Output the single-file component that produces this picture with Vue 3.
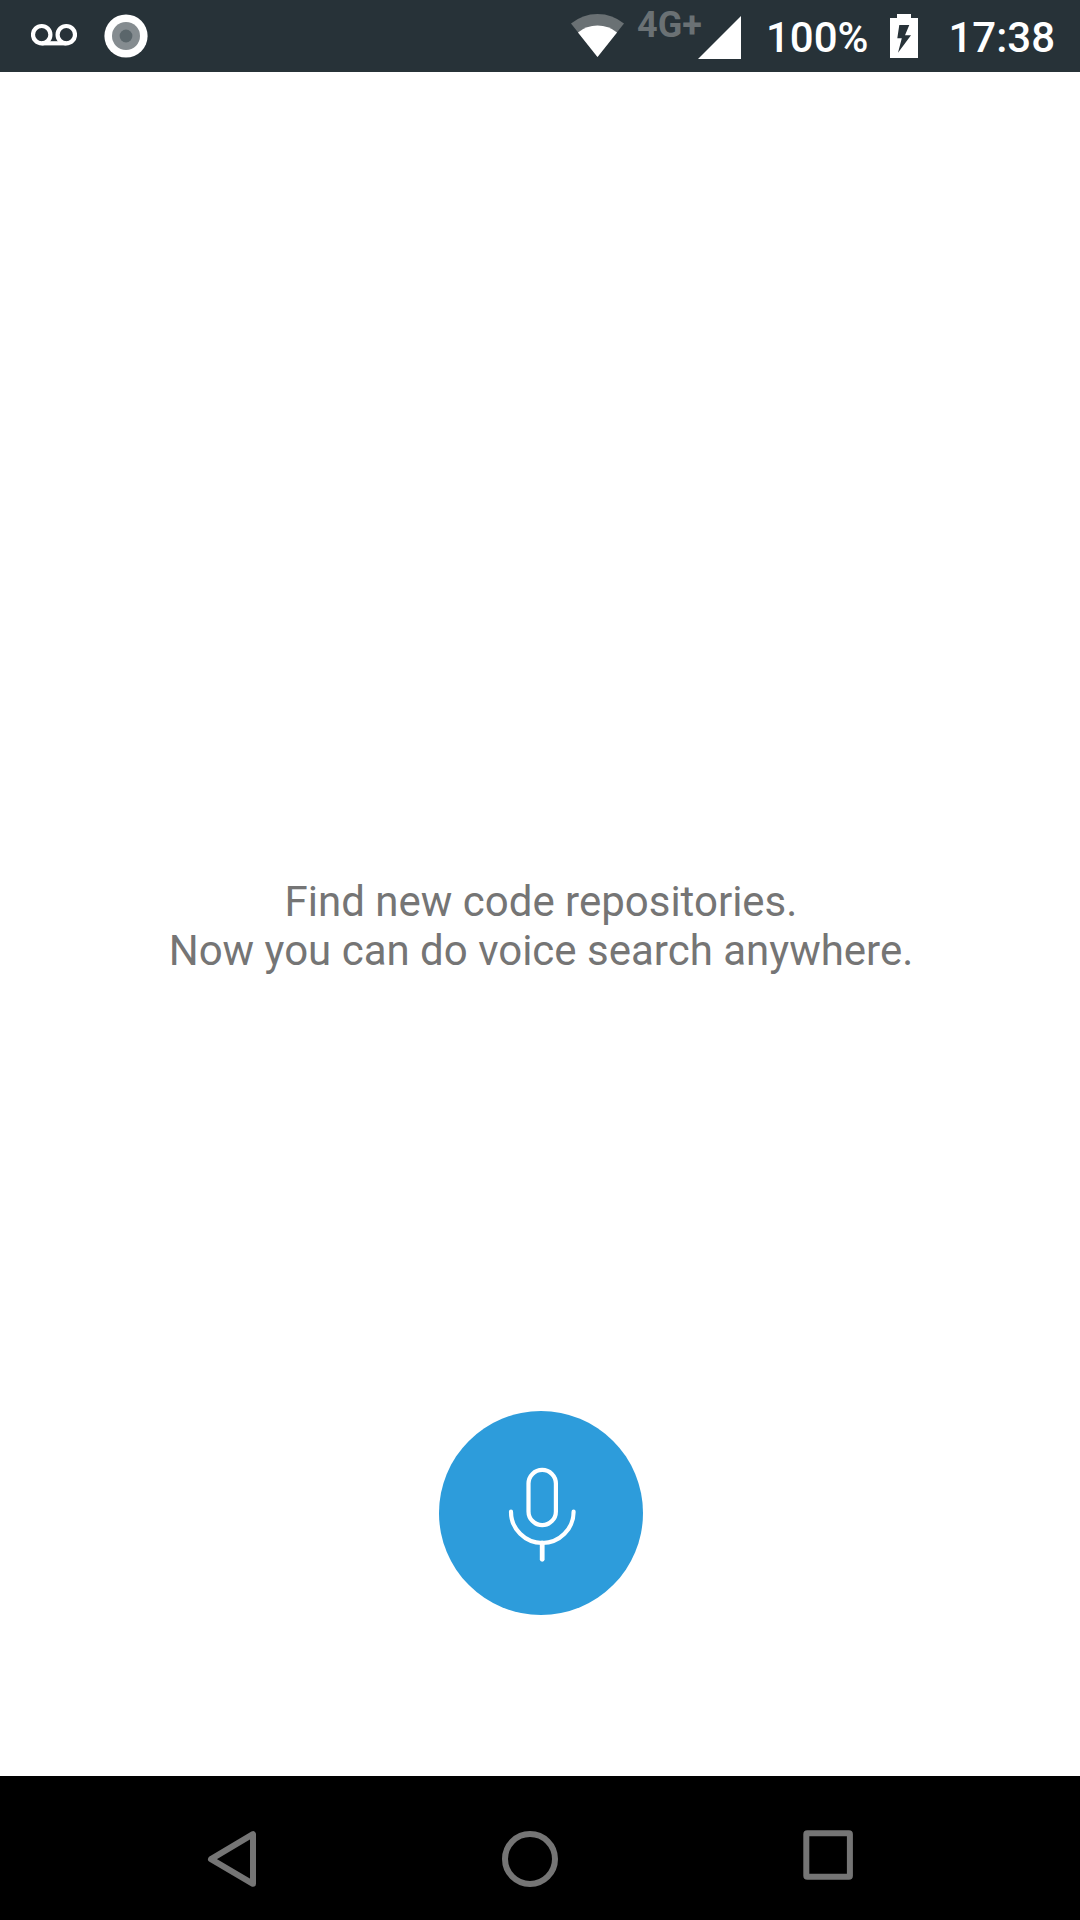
<script setup>
const battery = '100%'
const time = '17:38'
const network = '4G+'
</script>

<template>
  <div class="screen">
    <header class="status">
      <div class="notifications">
        <svg width="46" height="48" viewBox="0 0 46 48" fill="none" stroke="#fff" stroke-width="4.2" aria-label="Voicemail">
          <circle cx="10.7" cy="22.7" r="8.7" />
          <circle cx="35.3" cy="22.7" r="8.7" />
          <path d="M10.7 31.3H35.3" />
        </svg>
        <svg width="44" height="48" viewBox="0 0 44 48" aria-label="Recording">
          <circle cx="22" cy="24" r="21.6" fill="#fff" />
          <circle cx="22" cy="24" r="14" fill="#858c90" />
          <circle cx="22" cy="24" r="6.4" fill="#5b666b" />
        </svg>
      </div>
      <div class="system">
        <svg width="54" height="48" viewBox="0 0 54 48" aria-label="Wi-Fi">
          <path d="M26.5 45L0 11.6Q11.5 2 26.5 2T53 11.6Z" fill="#6a7174" />
          <path d="M26.5 45L7 20.4Q15.5 13.6 26.5 13.6T46 20.4Z" fill="#fff" />
        </svg>
        <span class="network">{{ network }}</span>
        <svg class="signal" width="43" height="48" viewBox="0 0 43 48" aria-label="Signal">
          <path d="M43 4V47H0Z" fill="#fff" />
        </svg>
        <span class="percent">{{ battery }}</span>
        <svg class="battery" width="28" height="48" viewBox="0 0 28 48" aria-label="Charging">
          <path d="M7 2H21V6H28V46H0V6H7Z" fill="#fff" />
          <path d="M9.3 13H19.3L15 23.3H21L8 40.7L11.8 26.3H7.3Z" fill="#273238" />
        </svg>
        <time class="clock">{{ time }}</time>
      </div>
    </header>

    <main class="content">
      <p class="message">Find new code repositories.<br />Now you can do voice search anywhere.</p>
      <button class="mic" type="button" aria-label="Start voice search">
        <svg width="204" height="204" viewBox="1 0 204 204" fill="none" stroke="#fff" stroke-width="4.2" stroke-linecap="round">
          <rect x="90.5" y="58.9" width="27.4" height="55.2" rx="13.7" />
          <path d="M73 100.7A31.3 31.3 0 0 0 135.6 100.7" />
          <path d="M104.2 132V148.3" stroke-width="4.8" />
        </svg>
      </button>
    </main>

    <nav class="navigation" aria-label="System">
      <button type="button" aria-label="Back">
        <svg width="60" height="60" viewBox="0 0 60 60"><path d="M51 5.2V54.8L9 30.2Z" /></svg>
      </button>
      <button type="button" aria-label="Home">
        <svg width="60" height="60" viewBox="0 0 60 60"><circle cx="30" cy="30" r="25" /></svg>
      </button>
      <button type="button" aria-label="Recent apps">
        <svg width="60" height="60" viewBox="0 0 60 60"><rect x="8.3" y="4.2" width="43.6" height="43.6" rx="1" /></svg>
      </button>
    </nav>
  </div>
</template>

<style>
body {
  margin: 0;
}
</style>

<style scoped>
.screen {
  display: flex;
  flex-direction: column;
  min-height: 100vh;
  background: #fff;
  font-family: Roboto, "Liberation Sans", sans-serif;
  font-size: 42px;
  line-height: 49px;
}

svg {
  display: block;
  flex: none;
}

.status {
  display: flex;
  align-items: center;
  justify-content: space-between;
  height: 72px;
  padding: 0 25px 0 31px;
  background: #273238;
  color: #fff;
  font-weight: 500;
}

.notifications,
.system {
  display: flex;
  align-items: center;
}

.notifications {
  gap: 27px;
}

.network {
  align-self: flex-start;
  margin-left: 12px;
  color: #6a7174;
  font-size: 36px;
  font-weight: 700;
  line-height: 28px;
}

.signal {
  margin-left: -4px;
}

.percent,
.clock {
  padding-top: 2px;
}

.percent {
  margin-left: 25px;
}

.battery {
  margin-left: 22px;
}

.clock {
  margin-left: 30px;
}

.content {
  flex: 1;
  display: grid;
  grid-template-rows: 1fr auto 1fr;
  justify-items: center;
  padding: 4px 0 0 2px;
}

.message {
  grid-row: 2;
  margin: 0;
  color: #757575;
  text-align: center;
}

.mic {
  grid-row: 3;
  align-self: end;
  width: 204px;
  height: 204px;
  margin-bottom: 161px;
  padding: 0;
  border: 0;
  border-radius: 50%;
  background: #2d9cdb;
}

.navigation {
  display: flex;
  padding: 53px 103px 31px 83px;
  background: #000;
}

.navigation button {
  flex: 1;
  display: flex;
  justify-content: center;
  padding: 0;
  border: 0;
  background: none;
}

.navigation svg {
  fill: none;
  stroke: #757575;
  stroke-width: 6;
  stroke-linejoin: round;
}
</style>
